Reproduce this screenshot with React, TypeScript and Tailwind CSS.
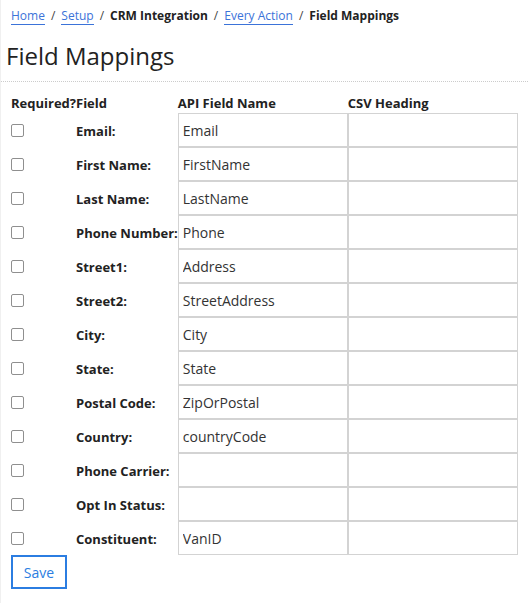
import React from 'react'

const rows = [
  { label: 'Email:', api: 'Email' },
  { label: 'First Name:', api: 'FirstName' },
  { label: 'Last Name:', api: 'LastName' },
  { label: 'Phone Number:', api: 'Phone' },
  { label: 'Street1:', api: 'Address' },
  { label: 'Street2:', api: 'StreetAddress' },
  { label: 'City:', api: 'City' },
  { label: 'State:', api: 'State' },
  { label: 'Postal Code:', api: 'ZipOrPostal' },
  { label: 'Country:', api: 'countryCode' },
  { label: 'Phone Carrier:', api: '' },
  { label: 'Opt In Status:', api: '' },
  { label: 'Constituent:', api: 'VanID' },
]

export default function App() {
  return (
    <div
      className="min-h-[603px] w-[529px] bg-white border-l border-[#f0f0f0] text-[#222]"
      style={{ fontFamily: '"Open Sans", "Liberation Sans", sans-serif' }}
    >
      <nav className="flex items-center gap-[6px] pl-[10px] pt-[6px] text-[12px] leading-[20px]">
        <a href="#" className="text-[#3b73d9] border-b border-[#3b73d9] leading-[17px]">Home</a>
        <span className="text-[#444]">/</span>
        <a href="#" className="text-[#3b73d9] border-b border-[#3b73d9] leading-[17px]">Setup</a>
        <span className="text-[#444]">/</span>
        <span className="font-bold">CRM Integration</span>
        <span className="text-[#444]">/</span>
        <a href="#" className="text-[#3b73d9] border-b border-[#3b73d9] leading-[17px]">Every Action</a>
        <span className="text-[#444]">/</span>
        <span className="font-bold">Field Mappings</span>
      </nav>
      <h1 className="pl-[5px] pt-[13px] pb-[8px] text-[24px] leading-[34px] font-normal text-[#222] border-b border-dotted border-[#ccc] mr-[1px]">
        Field Mappings
      </h1>
      <div className="pl-[10px] pt-[12px]">
        <table className="border-collapse text-[13px]">
          <thead>
            <tr className="h-[19px] text-left">
              <th className="p-0 font-bold leading-[19px] align-middle">Required?</th>
              <th className="p-0 font-bold leading-[19px] align-middle">Field</th>
              <th className="p-0 font-bold leading-[19px] align-middle">API Field Name</th>
              <th className="p-0 font-bold leading-[19px] align-middle">CSV Heading</th>
            </tr>
          </thead>
          <tbody>
            {rows.map((r) => (
              <tr key={r.label} className="h-[34px]">
                <td className="p-0 align-middle">
                  <input
                    type="checkbox"
                    className="block h-[13px] w-[13px] appearance-none rounded-[2px] border border-[#8f8f8f] bg-white"
                  />
                </td>
                <td className="p-0 pt-[4px] align-middle font-bold whitespace-nowrap text-[#222]">{r.label}</td>
                <td className="p-0 align-middle">
                  <input
                    type="text"
                    defaultValue={r.api}
                    className="block h-[34px] w-[170px] border border-[#d3d3d3] px-[4px] text-[14px] text-[#333] outline-none"
                  />
                </td>
                <td className="p-0 align-middle">
                  <input
                    type="text"
                    className="block h-[34px] w-[170px] border border-[#d3d3d3] px-[4px] text-[14px] text-[#333] outline-none"
                  />
                </td>
              </tr>
            ))}
          </tbody>
        </table>
        <button className="mt-0 h-[34px] w-[56px] border-2 border-[#2b7de1] bg-white text-[14px] text-[#2b7de1]">
          Save
        </button>
      </div>
    </div>
  )
}
